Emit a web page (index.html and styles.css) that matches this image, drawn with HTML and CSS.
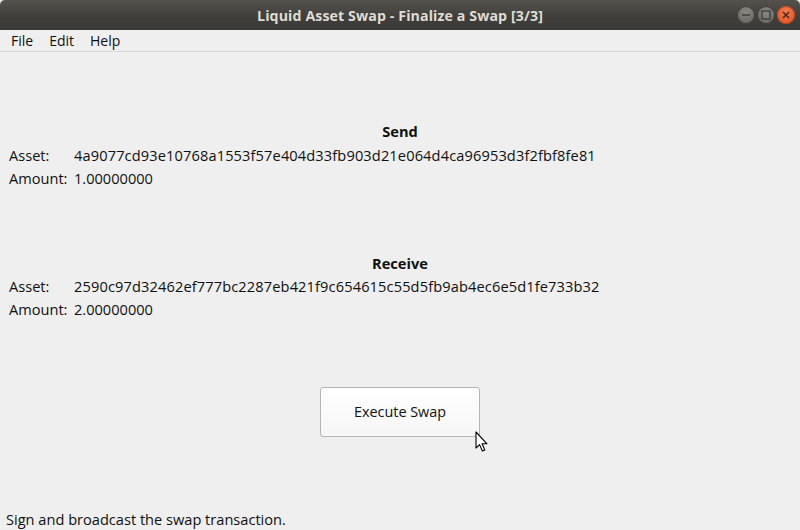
FILE: index.html
```html
<!DOCTYPE html>
<html>
<head>
<meta charset="utf-8">
<link rel="stylesheet" href="styles.css">
</head>
<body>
<div class="window">
  <div class="titlebar">
    <div class="title">Liquid Asset Swap - Finalize a Swap [3/3]</div>
    <div class="controls">
      <span class="ctl ctl-min"><svg width="18" height="18" viewBox="0 0 18 18"><line x1="5" y1="9" x2="13" y2="9" stroke="#3c3b37" stroke-width="1.4"/></svg></span>
      <span class="ctl ctl-max"><svg width="18" height="18" viewBox="0 0 18 18"><rect x="5" y="5" width="8" height="8" fill="none" stroke="#3c3b37" stroke-width="1.3"/></svg></span>
      <span class="ctl ctl-close"><svg width="18" height="18" viewBox="0 0 18 18"><path d="M6 6 L12 12 M12 6 L6 12" stroke="#3c2a20" stroke-width="1.5"/></svg></span>
    </div>
  </div>
  <div class="menubar">
    <span class="menu-item">File</span>
    <span class="menu-item">Edit</span>
    <span class="menu-item">Help</span>
  </div>
  <div class="content">
    <div class="section section-send">
      <div class="heading">Send</div>
      <div class="row"><span class="label">Asset:</span><span class="value hash">4a9077cd93e10768a1553f57e404d33fb903d21e064d4ca96953d3f2fbf8fe81</span></div>
      <div class="row"><span class="label">Amount:</span><span class="value">1.00000000</span></div>
    </div>
    <div class="section section-receive">
      <div class="heading">Receive</div>
      <div class="row"><span class="label">Asset:</span><span class="value hash">2590c97d32462ef777bc2287eb421f9c654615c55d5fb9ab4ec6e5d1fe733b32</span></div>
      <div class="row"><span class="label">Amount:</span><span class="value">2.00000000</span></div>
    </div>
    <div class="actions">
      <button class="btn">Execute Swap</button>
    </div>
    <div class="status">Sign and broadcast the swap transaction.</div>
  </div>
  <svg class="cursor" width="14" height="22" viewBox="0 0 14 22">
    <path d="M1 1 L1 17 L4.6 13.6 L7.4 20 L9.8 19 L7.1 12.8 L12 12.8 Z" fill="#ffffff" stroke="#000000" stroke-width="1.1" stroke-linejoin="round"/>
  </svg>
</div>
</body>
</html>
```
FILE: styles.css
```css
html, body {
  margin: 0;
  padding: 0;
}
body {
  width: 800px;
  height: 530px;
  overflow: hidden;
  background: #efefef;
  font-family: "Open Sans", "DejaVu Sans", sans-serif;
  color: #101010;
}
.window {
  position: relative;
  width: 800px;
  height: 530px;
  display: flex;
  flex-direction: column;
}
.titlebar {
  height: 30px;
  flex: none;
  background: linear-gradient(#53524d, #3f3e3a 60%, #3b3a36);
  border-radius: 5px 5px 0 0;
  display: flex;
  align-items: center;
  justify-content: center;
  position: relative;
}
.title {
  color: #dfdbd2;
  font-weight: bold;
  font-size: 14.2px;
  letter-spacing: 0.1px;
}
.controls {
  position: absolute;
  right: 5px;
  top: 6px;
  display: flex;
  gap: 2px;
}
.ctl {
  width: 18px;
  height: 18px;
  border-radius: 50%;
  display: flex;
  align-items: center;
  justify-content: center;
  background: radial-gradient(circle at 50% 35%, #8a8983, #5f5e5a);
  box-shadow: inset 0 0 0 1px #3a3935;
}
.ctl-close {
  background: radial-gradient(circle at 50% 35%, #f47a4e, #df4d1c);
  box-shadow: inset 0 0 0 1px #b8461c;
}
.menubar {
  height: 21px;
  flex: none;
  border-bottom: 1px solid #d6d6d6;
  display: flex;
  align-items: center;
  padding-left: 11px;
  gap: 16px;
  font-size: 14px;
}
.content {
  flex: 1;
  display: flex;
  flex-direction: column;
  padding-top: 68px;
}
.section {
  display: flex;
  flex-direction: column;
  font-size: 14.6px;
}
.section-send .heading,
.section-send .row {
  line-height: 23.5px;
}
.section-receive {
  margin-top: 61px;
}
.section-receive .heading,
.section-receive .row {
  line-height: 23px;
}
.heading {
  font-weight: bold;
  text-align: center;
}
.row {
  display: flex;
  padding-left: 9px;
}
.label {
  width: 65px;
  flex: none;
}
.hash {
  letter-spacing: 0.13px;
}
.actions {
  display: flex;
  justify-content: center;
  margin-top: 66px;
}
.btn {
  width: 160px;
  height: 50px;
  border: 1px solid #b5b5b5;
  border-radius: 3px;
  background: linear-gradient(#ffffff, #f6f6f6);
  font-family: inherit;
  font-size: 14.4px;
  color: #101010;
  padding: 0;
}
.status {
  margin-top: auto;
  padding-left: 6px;
  font-size: 14.6px;
  line-height: 22px;
}
.cursor {
  position: absolute;
  left: 475px;
  top: 431px;
}
```
